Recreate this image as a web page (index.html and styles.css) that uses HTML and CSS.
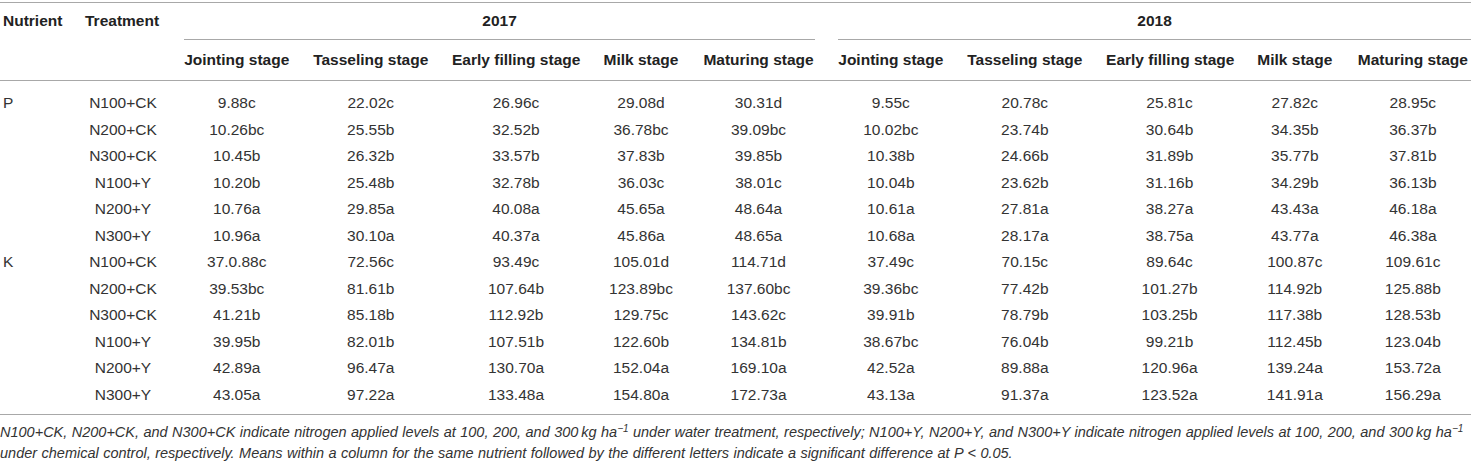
FILE: index.html
```html
<!DOCTYPE html>
<html lang="en">
<head>
<meta charset="utf-8">
<title>Table</title>
<link rel="stylesheet" href="styles.css">
</head>
<body>
<div class="wrap">
<table class="data">
  <colgroup>
    <col class="c-nut"><col class="c-trt">
    <col class="c-j"><col class="c-t"><col class="c-e"><col class="c-m"><col class="c-mt">
    <col class="c-j"><col class="c-t"><col class="c-e2"><col class="c-m2"><col class="c-mt2">
  </colgroup>
  <thead>
    <tr class="hr1">
      <th class="lead first" rowspan="2">Nutrient</th>
      <th class="lead" rowspan="2">Treatment</th>
      <th class="year" colspan="5"><div class="year-in">2017</div></th>
      <th class="year last" colspan="5"><div class="year-in">2018</div></th>
    </tr>
    <tr class="hr2">
      <th>Jointing stage</th><th>Tasseling stage</th><th>Early filling stage</th><th>Milk stage</th><th>Maturing stage</th>
      <th>Jointing stage</th><th>Tasseling stage</th><th>Early filling stage</th><th>Milk stage</th><th class="last">Maturing stage</th>
    </tr>
  </thead>
  <tbody>
    <tr class="top"><td class="first">P</td><td>N100+CK</td><td>9.88c</td><td>22.02c</td><td>26.96c</td><td>29.08d</td><td>30.31d</td><td>9.55c</td><td>20.78c</td><td>25.81c</td><td>27.82c</td><td class="last">28.95c</td></tr>
    <tr><td class="first"></td><td>N200+CK</td><td>10.26bc</td><td>25.55b</td><td>32.52b</td><td>36.78bc</td><td>39.09bc</td><td>10.02bc</td><td>23.74b</td><td>30.64b</td><td>34.35b</td><td class="last">36.37b</td></tr>
    <tr><td class="first"></td><td>N300+CK</td><td>10.45b</td><td>26.32b</td><td>33.57b</td><td>37.83b</td><td>39.85b</td><td>10.38b</td><td>24.66b</td><td>31.89b</td><td>35.77b</td><td class="last">37.81b</td></tr>
    <tr><td class="first"></td><td>N100+Y</td><td>10.20b</td><td>25.48b</td><td>32.78b</td><td>36.03c</td><td>38.01c</td><td>10.04b</td><td>23.62b</td><td>31.16b</td><td>34.29b</td><td class="last">36.13b</td></tr>
    <tr><td class="first"></td><td>N200+Y</td><td>10.76a</td><td>29.85a</td><td>40.08a</td><td>45.65a</td><td>48.64a</td><td>10.61a</td><td>27.81a</td><td>38.27a</td><td>43.43a</td><td class="last">46.18a</td></tr>
    <tr><td class="first"></td><td>N300+Y</td><td>10.96a</td><td>30.10a</td><td>40.37a</td><td>45.86a</td><td>48.65a</td><td>10.68a</td><td>28.17a</td><td>38.75a</td><td>43.77a</td><td class="last">46.38a</td></tr>
    <tr><td class="first">K</td><td>N100+CK</td><td>37.0.88c</td><td>72.56c</td><td>93.49c</td><td>105.01d</td><td>114.71d</td><td>37.49c</td><td>70.15c</td><td>89.64c</td><td>100.87c</td><td class="last">109.61c</td></tr>
    <tr><td class="first"></td><td>N200+CK</td><td>39.53bc</td><td>81.61b</td><td>107.64b</td><td>123.89bc</td><td>137.60bc</td><td>39.36bc</td><td>77.42b</td><td>101.27b</td><td>114.92b</td><td class="last">125.88b</td></tr>
    <tr><td class="first"></td><td>N300+CK</td><td>41.21b</td><td>85.18b</td><td>112.92b</td><td>129.75c</td><td>143.62c</td><td>39.91b</td><td>78.79b</td><td>103.25b</td><td>117.38b</td><td class="last">128.53b</td></tr>
    <tr><td class="first"></td><td>N100+Y</td><td>39.95b</td><td>82.01b</td><td>107.51b</td><td>122.60b</td><td>134.81b</td><td>38.67bc</td><td>76.04b</td><td>99.21b</td><td>112.45b</td><td class="last">123.04b</td></tr>
    <tr><td class="first"></td><td>N200+Y</td><td>42.89a</td><td>96.47a</td><td>130.70a</td><td>152.04a</td><td>169.10a</td><td>42.52a</td><td>89.88a</td><td>120.96a</td><td>139.24a</td><td class="last">153.72a</td></tr>
    <tr class="bottom"><td class="first"></td><td>N300+Y</td><td>43.05a</td><td>97.22a</td><td>133.48a</td><td>154.80a</td><td>172.73a</td><td>43.13a</td><td>91.37a</td><td>123.52a</td><td>141.91a</td><td class="last">156.29a</td></tr>
  </tbody>
</table>
<p class="note">N100+CK, N200+CK, and N300+CK indicate nitrogen applied levels at 100, 200, and <span class="unit">300&#8201;kg ha<sup>&#8722;1</sup></span> under water treatment, respectively; N100+Y, N200+Y, and N300+Y indicate nitrogen applied levels at 100, 200, and <span class="unit">300&#8201;kg ha<sup>&#8722;1</sup></span> under chemical control, respectively. Means within a column for the same nutrient followed by the different letters indicate a significant difference at P &lt; 0.05.</p>
</div>
</body>
</html>
```

FILE: styles.css
```css
html, body {
  margin: 0;
  padding: 0;
  background: #ffffff;
}

.wrap {
  width: 1471px;
  padding-top: 2px;
  font-family: "Liberation Sans", Arial, Helvetica, sans-serif;
  color: #333333;
}

.data {
  width: 1471px;
  table-layout: fixed;
  border-collapse: separate;
  border-spacing: 0;
  border-top: 1px solid #a8a8a8;
  font-size: 15.5px;
}

.c-nut { width: 73.5px; }
.c-trt { width: 99px; }
.c-j { width: 128.5px; }
.c-t { width: 139.5px; }
.c-e { width: 151px; }
.c-m { width: 99px; }
.c-mt { width: 136px; }
.c-e2 { width: 150px; }
.c-m2 { width: 100.5px; }
.c-mt2 { width: 126px; }

th {
  font-weight: bold;
  color: #222222;
  padding: 0 11.5px;
  text-align: center;
  white-space: nowrap;
}

.hr1 th {
  line-height: 36px;
}

th.lead {
  text-align: left;
  vertical-align: top;
  border-bottom: 1px solid #a8a8a8;
}

th.year {
  vertical-align: top;
}

.year-in {
  border-bottom: 1px solid #a8a8a8;
}

.hr2 th {
  line-height: 40px;
  border-bottom: 1px solid #a8a8a8;
}

td {
  padding: 0 11.5px;
  line-height: 26.5px;
  text-align: center;
  white-space: nowrap;
}

.first {
  padding-left: 3px;
  text-align: left;
}

td.first {
  text-align: left;
}

.last {
  padding-right: 2px;
}

th.year.last {
  padding-right: 0;
}

.top td {
  padding-top: 9px;
}

.bottom td {
  padding-bottom: 6px;
  border-bottom: 1px solid #a8a8a8;
}

.note {
  margin: 0;
  padding-top: 7px;
  font-size: 14.5px;
  word-spacing: 0.4px;
  line-height: 21px;
  font-style: italic;
  color: #333333;
}

.unit {
  white-space: nowrap;
}

.note sup {
  font-size: 10px;
  line-height: 0;
  vertical-align: 5px;
}
```
